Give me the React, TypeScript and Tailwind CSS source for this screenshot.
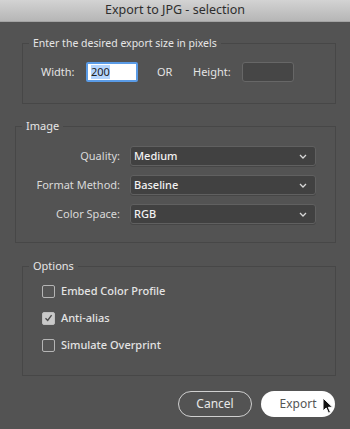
import React from "react";

const FONT = { fontFamily: '"Noto Sans", "Liberation Sans", sans-serif' };

function Chevron() {
  return (
    <svg width="8" height="5" viewBox="0 0 8 5" className="text-[#d8d8d8]" aria-hidden>
      <path d="M1 1l3 3 3-3" fill="none" stroke="currentColor" strokeWidth="1.3" />
    </svg>
  );
}

function SelectRow({ label, value }: { label: string; value: string }) {
  return (
    <div className="flex items-center">
      <span className="w-[114px] pr-[10px] text-right text-[11px] text-[#dadada]">{label}</span>
      <div className="flex h-[20px] w-[186px] items-center justify-between rounded-[3px] border border-[#606060] bg-[#414141] pl-[3px] pr-[8px] shadow-[0_1px_0_rgba(0,0,0,0.15)]">
        <span className="text-[11px] font-medium text-[#f2f2f2]">{value}</span>
        <Chevron />
      </div>
    </div>
  );
}

function Check({ label, checked }: { label: string; checked?: boolean }) {
  return (
    <label className="flex h-[16px] items-center gap-[6px]">
      <span
        className={`flex h-[13px] w-[13px] items-center justify-center rounded-[2px] border ${
          checked ? "border-[#bdbdbd] bg-[#c9c9c9]" : "border-[#b5b5b5] bg-[#555555]"
        }`}
      >
        {checked && (
          <svg width="9" height="8" viewBox="0 0 9 8" aria-hidden>
            <path d="M1.5 4.2l2.2 2.2L7.6 1.2" fill="none" stroke="#4a4a4a" strokeWidth="1.4" />
          </svg>
        )}
      </span>
      <span className="text-[11px] font-medium text-[#e4e4e4]">{label}</span>
    </label>
  );
}

export default function App() {
  return (
    <div className="relative flex h-[429px] w-[350px] flex-col overflow-hidden bg-[#535353]" style={FONT}>
      <div className="flex h-[22px] shrink-0 items-center justify-center border-b border-[#a3a3a3] bg-gradient-to-b from-[#d3d3d3] to-[#b6b6b6]">
        <span className="text-[12.5px] text-[#2e2e2e]">Export to JPG - selection</span>
      </div>

      <fieldset className="ml-[22px] mt-[13px] w-[314px] border border-[#474747]">
        <legend className="ml-[6px] px-[4px] text-[10.5px] leading-[16px] text-[#e6e6e6]">
          Enter the desired export size in pixels
        </legend>
        <div className="flex items-center pb-[21px] pl-[18px] pt-[11px] text-[11px] text-[#e4e4e4]">
          <span className="w-[45px]">Width:</span>
          <div className="flex h-[20px] w-[52px] items-center rounded-[2px] border-2 border-[#5a9be6] bg-white pl-[3px]">
            <span className="bg-[#b4d5fe] text-[11px] leading-[14px] text-[#222]">200</span>
          </div>
          <span className="ml-[19px] w-[36px]">OR</span>
          <span className="w-[49px]">Height:</span>
          <div className="h-[20px] w-[52px] rounded-[3px] border border-[#676767] bg-[#464646]" />
        </div>
      </fieldset>

      <fieldset className="ml-[15px] mt-[14px] w-[321px] border border-[#474747]">
        <legend className="ml-[6px] px-[4px] text-[11px] leading-[16px] text-[#e6e6e6]">Image</legend>
        <div className="flex flex-col gap-[9px] pb-[18px] pt-[12px]">
          <SelectRow label="Quality:" value="Medium" />
          <SelectRow label="Format Method:" value="Baseline" />
          <SelectRow label="Color Space:" value="RGB" />
        </div>
      </fieldset>

      <fieldset className="ml-[22px] mt-[15px] w-[314px] border border-[#474747]">
        <legend className="ml-[6px] px-[4px] text-[11px] leading-[16px] text-[#e6e6e6]">Options</legend>
        <div className="flex flex-col gap-[11px] pb-[22px] pl-[19px] pt-[9px]">
          <Check label="Embed Color Profile" />
          <Check label="Anti-alias" checked />
          <Check label="Simulate Overprint" />
        </div>
      </fieldset>

      <div className="mt-[15px] flex justify-end gap-[9px] pr-[15px]">
        <button className="h-[26px] w-[74px] rounded-full border border-[#d0d0d0] text-[12px] text-[#e8e8e8]">
          Cancel
        </button>
        <button className="h-[26px] w-[74px] rounded-full bg-white text-[12px] text-[#555]">Export</button>
      </div>

      <svg
        className="absolute left-[322px] top-[397px]"
        width="12"
        height="18"
        viewBox="0 0 12 18"
        aria-hidden
      >
        <path d="M1 1v13l3.2-3 2.3 5.2 2-0.9-2.2-5h4.4z" fill="#111" stroke="#fff" strokeWidth="1" />
      </svg>
    </div>
  );
}
